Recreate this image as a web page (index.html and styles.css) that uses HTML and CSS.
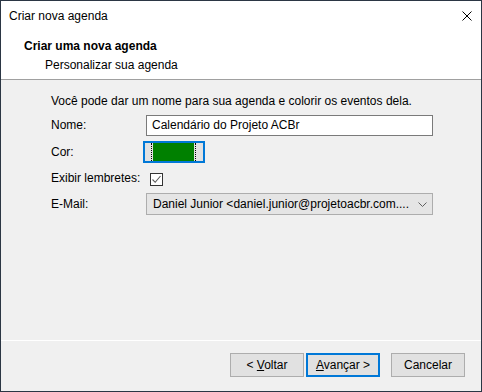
FILE: index.html
```html
<!DOCTYPE html>
<html lang="pt-BR">
<head>
  <meta charset="UTF-8" />
  <title>Criar nova agenda</title>
  <link rel="stylesheet" href="styles.css">
</head>
<body>
  <div class="window">
    <div class="titlebar">
      <span class="title">Criar nova agenda</span>
      <span class="close">
        <svg width="10" height="10" viewBox="0 0 10 10">
          <path d="M0.5 0.5 L9.5 9.5 M9.5 0.5 L0.5 9.5" stroke="#000" stroke-width="1" fill="none" />
        </svg>
      </span>
    </div>

    <div class="header">
      <div class="header-title">Criar uma nova agenda</div>
      <div class="header-sub">Personalizar sua agenda</div>
    </div>

    <div class="content">
      <div class="intro">Você pode dar um nome para sua agenda e colorir os eventos dela.</div>

      <div class="form">
        <label class="label">Nome:</label>
        <div class="text-input">Calendário do Projeto ACBr</div>

        <label class="label">Cor:</label>
        <div class="color-cell">
          <span class="color-btn">
            <span class="focus-rect"><span class="swatch"></span></span>
          </span>
        </div>

        <label class="label">Exibir lembretes:</label>
        <div class="check-cell">
          <span class="checkbox">
            <svg width="11" height="11" viewBox="0 0 11 11">
              <path d="M1.5 5.5 L4.2 8.3 L9.5 2" stroke="#5a5a5a" stroke-width="1.1" fill="none" />
            </svg>
          </span>
        </div>

        <label class="label">E-Mail:</label>
        <div class="select">
          <span>Daniel Junior &lt;daniel.junior@projetoacbr.com....</span>
          <svg width="9" height="5" viewBox="0 0 9 5">
            <path d="M0.5 0.5 L4.5 4.5 L8.5 0.5" stroke="#606060" stroke-width="1" fill="none" />
          </svg>
        </div>
      </div>
    </div>

    <div class="footer">
      <button class="btn"><span>&lt; <u>V</u>oltar</span></button>
      <button class="btn btn-default"><span><u>A</u>vançar &gt;</span></button>
      <button class="btn btn-cancel"><span>Cancelar</span></button>
    </div>
  </div>
</body>
</html>
```

FILE: styles.css
```css
* {
  box-sizing: border-box;
  margin: 0;
  padding: 0;
}

body {
  font-family: 'Liberation Sans', Arial, sans-serif;
  font-size: 12px;
  color: #000;
  background: #f0f0f0;
}

.window {
  width: 482px;
  height: 392px;
  border: 1px solid #2b3644;
  display: flex;
  flex-direction: column;
  background: #f0f0f0;
}

.titlebar {
  height: 30px;
  background: #fff;
  display: flex;
  align-items: center;
  justify-content: space-between;
  padding-left: 8px;
  padding-right: 9px;
}

.close {
  display: flex;
  width: 10px;
  height: 10px;
}

.header {
  height: 49px;
  background: #fff;
  border-bottom: 1px solid #a0a0a0;
  padding: 8px 0 0 23px;
}

.header-title {
  font-weight: bold;
  line-height: 15px;
}

.header-sub {
  line-height: 15px;
  margin-top: 4px;
  padding-left: 21px;
}

.content {
  flex: 1;
  padding: 14px 0 0 50px;
}

.intro {
  line-height: 15px;
}

.form {
  margin-top: 6px;
  display: grid;
  grid-template-columns: 95px 287px;
  grid-template-rows: 21px 22px 20px 22px;
  row-gap: 5px;
  align-items: center;
}

.label {
  line-height: 15px;
}

.text-input {
  height: 21px;
  border: 1px solid #7a7a7a;
  background: #fff;
  padding-left: 5px;
  line-height: 19px;
}

.color-cell {
  height: 22px;
}

.color-btn {
  display: flex;
  width: 62px;
  height: 22px;
  margin-left: -3px;
  border: 2px solid #0078d7;
  background: #e1e1e1;
  padding: 0 7px 0 6px;
}

.focus-rect {
  flex: 1;
  display: flex;
  border-left: 1px dotted #000;
  border-right: 1px dotted #000;
  padding: 0 1px;
}

.swatch {
  flex: 1;
  background: #008000;
}

.check-cell {
  display: flex;
  padding-left: 4px;
  padding-top: 3px;
}

.checkbox {
  display: flex;
  align-items: center;
  justify-content: center;
  width: 13px;
  height: 13px;
  border: 1px solid #333;
  background: #fff;
}

.select {
  height: 22px;
  border: 1px solid #adadad;
  background: #e5e5e5;
  display: flex;
  align-items: center;
  justify-content: space-between;
  padding: 0 5px 0 6px;
}

.footer {
  height: 51px;
  border-top: 1px solid #fff;
  display: flex;
  justify-content: flex-end;
  padding: 12px 16px 0 0;
  gap: 2px;
}

.btn {
  width: 74px;
  height: 24px;
  border: 1px solid #adadad;
  background: #e1e1e1;
  font-family: inherit;
  font-size: 12px;
  color: #000;
}

.btn-default {
  border: 2px solid #0078d7;
}

.btn-cancel {
  margin-left: 9px;
}
```
